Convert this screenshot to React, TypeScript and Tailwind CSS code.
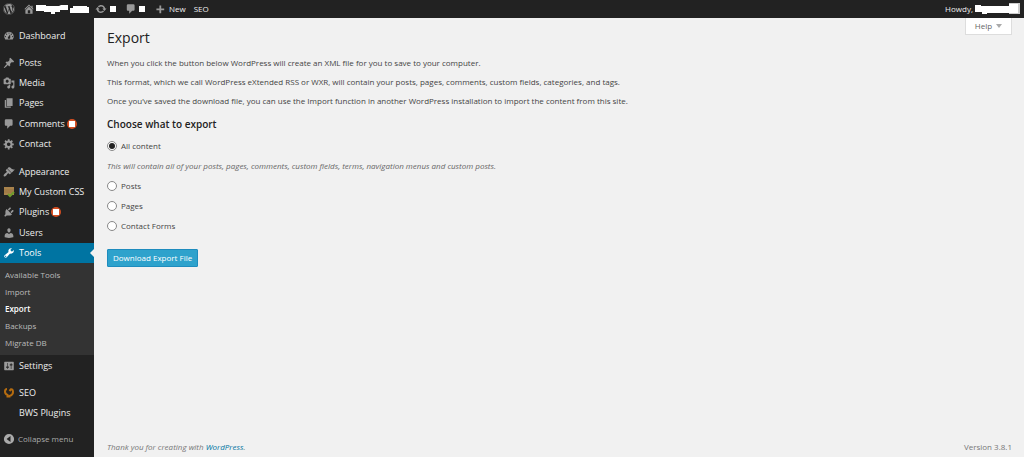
import { useState } from 'react';
import { FaWordpress } from 'react-icons/fa';

const icons = {
  dashboard:
    'M3.76 16h12.48A7.998 7.998 0 0 0 10 3a7.998 7.998 0 0 0-6.24 13zM10 4c.55 0 1 .45 1 1s-.45 1-1 1-1-.45-1-1 .45-1 1-1zM6 6c.55 0 1 .45 1 1s-.45 1-1 1-1-.45-1-1 .45-1 1-1zm8 0c.55 0 1 .45 1 1s-.45 1-1 1-1-.45-1-1 .45-1 1-1zm-5.37 5.55L12 7v6c0 1.1-.9 2-2 2s-2-.9-2-2c0-.57.24-1.08.63-1.45zM4 10c.55 0 1 .45 1 1s-.45 1-1 1-1-.45-1-1 .45-1 1-1zm12 0c.55 0 1 .45 1 1s-.45 1-1 1-1-.45-1-1 .45-1 1-1z',
  post: 'M10.44 3.02l1.82-1.82 6.36 6.35-1.83 1.82c-1.05-.68-2.48-.57-3.41.36l-.75.75c-.92.93-1.04 2.35-.35 3.41l-1.83 1.82-2.41-2.41-2.8 2.79c-.42.42-3.38 2.71-3.8 2.29s1.86-3.39 2.28-3.81l2.79-2.79L4.1 9.36l1.83-1.82c1.05.69 2.48.57 3.4-.36l.75-.75c.93-.92 1.05-2.35.36-3.41z',
  media:
    'M13 11V4c0-.55-.45-1-1-1h-1.67L9 1H5L3.67 3H2c-.55 0-1 .45-1 1v7c0 .55.45 1 1 1h10c.55 0 1-.45 1-1zM7 4.5c1.38 0 2.5 1.12 2.5 2.5S8.38 9.5 7 9.5 4.5 8.38 4.5 7 5.62 4.5 7 4.5zM14 6h5v10.5c0 1.38-1.12 2.5-2.5 2.5S14 17.88 14 16.5s1.12-2.5 2.5-2.5c.17 0 .34.02.5.05V9h-3V6zm-4 8.05V13h2v3.5c0 1.38-1.12 2.5-2.5 2.5S7 17.88 7 16.5 8.12 14 9.5 14c.17 0 .34.02.5.05z',
  page: 'M6 15V2h10v13H6zm-1 1h8v2H3V5h2v11z',
  comment:
    'M5 2h9q.82 0 1.41.59T16 4v7q0 .82-.59 1.41T14 13h-2l-5 5v-5H5q-.82 0-1.41-.59T3 11V4q0-.82.59-1.41T5 2z',
  gear: 'M18 12h-2.18c-.17.7-.44 1.35-.81 1.93l1.54 1.54-2.1 2.1-1.54-1.54c-.58.36-1.23.63-1.91.79V19H8v-2.18c-.68-.16-1.33-.43-1.91-.79l-1.54 1.54-2.12-2.12 1.54-1.54c-.36-.58-.63-1.23-.79-1.91H1V9.03h2.17c.16-.7.44-1.35.8-1.94L2.43 5.55l2.1-2.1 1.54 1.54c.58-.37 1.24-.64 1.93-.81V2h3v2.18c.68.16 1.33.43 1.91.79l1.54-1.54 2.12 2.12-1.54 1.54c.36.59.64 1.24.8 1.94H18V12zm-8.5 1.5c1.66 0 3-1.34 3-3s-1.34-3-3-3-3 1.34-3 3 1.34 3 3 3z',
  appearance:
    'M14.48 11.06L7.41 3.99l1.5-1.5c.5-.56 2.3-.47 3.51.32 1.21.8 1.43 1.28 2.91 2.1 1.18.64 2.45 1.26 4.45.85zm-.71.71L6.7 4.7 4.93 6.47c-.39.39-.39 1.02 0 1.41l1.06 1.06c.39.39.39 1.03 0 1.42-.6.6-1.43 1.11-2.21 1.69-.35.26-.7.53-1.01.84C1.43 14.23.4 16.08 1.4 17.07c.99 1 2.84-.03 4.18-1.36.31-.31.58-.66.85-1.02.57-.78 1.08-1.61 1.69-2.21.39-.39 1.02-.39 1.41 0l1.06 1.06c.39.39 1.02.39 1.41 0z',
  plugin:
    'M13.11 4.36L9.87 7.6 8 5.73l3.24-3.24c.35-.34 1.05-.2 1.56.32.52.51.66 1.21.31 1.55zm-8 1.77l.91-1.12 9.01 9.01-1.19.84c-.71.71-2.63 1.16-3.82 1.16H6.14L4.9 17.26c-.59.59-1.54.59-2.12 0-.59-.58-.59-1.53 0-2.12l1.24-1.24v-3.88c0-1.13.4-3.19 1.09-3.89zm7.26 3.97l3.24-3.24c.34-.35 1.04-.21 1.55.31.52.51.66 1.21.31 1.55l-3.24 3.25z',
  user: 'M10 9.25c-2.27 0-2.73-3.44-2.73-3.44C7 4.02 7.82 2 9.97 2c2.16 0 2.98 2.02 2.71 3.81 0 0-.41 3.44-2.68 3.44zm0 2.57L12.72 10c2.39 0 4.52 2.33 4.52 4.53v2.49s-3.65 1.13-7.24 1.13c-3.65 0-7.24-1.13-7.24-1.13v-2.49c0-2.25 1.94-4.48 4.47-4.48z',
  tools:
    'M16.68 9.77c-1.34 1.34-3.3 1.67-4.95.99l-5.41 6.52c-.99.99-2.59.99-3.58 0s-.99-2.59 0-3.57l6.52-5.42c-.68-1.65-.35-3.61.99-4.95 1.28-1.28 3.12-1.62 4.72-1.06l-2.89 2.89 2.82 2.82 2.86-2.87c.53 1.58.18 3.39-1.08 4.65zM3.81 16.21c.4.39 1.04.39 1.43 0 .4-.4.4-1.04 0-1.43-.39-.4-1.03-.4-1.43 0-.39.39-.39 1.03 0 1.43z',
  settings:
    'M18 16V4c0-.55-.45-1-1-1H3c-.55 0-1 .45-1 1v12c0 .55.45 1 1 1h14c.55 0 1-.45 1-1zM8 11h1c.55 0 1 .45 1 1s-.45 1-1 1H8v1.5c0 .28-.22.5-.5.5s-.5-.22-.5-.5V13H6c-.55 0-1-.45-1-1s.45-1 1-1h1V5.5c0-.28.22-.5.5-.5s.5.22.5.5V11zm5-2h-1c-.55 0-1-.45-1-1s.45-1 1-1h1V5.5c0-.28.22-.5.5-.5s.5.22.5.5V7h1c.55 0 1 .45 1 1s-.45 1-1 1h-1v5.5c0 .28-.22.5-.5.5s-.5-.22-.5-.5V9z',
  home: 'M16 8.5l1.53 1.53-1.06 1.06L10 4.6l-6.47 6.49-1.06-1.06L10 2.5l4 4v-2h2v4zm-6-2.46l6 5.99V18H4v-5.97zM12 17v-5H8v5h4z',
  update:
    'M10.2 3.28c3.53 0 6.43 2.61 6.92 6h2.08l-3.5 4-3.5-4h2.32c-.45-1.97-2.21-3.45-4.32-3.45-1.45 0-2.73.71-3.54 1.78L4.95 5.66C6.23 4.2 8.11 3.28 10.2 3.28zm-.4 13.44c-3.52 0-6.43-2.61-6.92-6H.8l3.5-4c1.17 1.33 2.33 2.67 3.5 4H5.48c.45 1.97 2.21 3.45 4.32 3.45 1.45 0 2.73-.71 3.54-1.78l1.71 1.95c-1.28 1.46-3.15 2.38-5.25 2.38z',
  plus: 'M17 9v3h-5v5H9v-5H4V9h5V4h3v5h5z',
  collapse:
    'M10 1.5a8.5 8.5 0 1 0 0 17 8.5 8.5 0 0 0 0-17zM12.5 5v10L6 10z',
};

type IconName = keyof typeof icons;

function Icon({ name }: { name: IconName }) {
  return (
    <svg viewBox="0 0 20 20" className="size-3 shrink-0" fill="currentColor" fillRule="evenodd" aria-hidden="true">
      <path d={icons[name]} />
    </svg>
  );
}

function CssIcon() {
  return (
    <svg viewBox="0 0 12 12" className="size-3 shrink-0" aria-hidden="true">
      <path d="M1 1h10v8H1z" fill="#a9834c" />
      <path d="M1 4h10M1 6h10" stroke="#8a683a" strokeWidth=".5" />
      <path d="M5 8l2 2 4-4" stroke="#6f9c2c" strokeWidth="2" fill="none" />
    </svg>
  );
}

function SeoIcon() {
  return (
    <svg viewBox="0 0 12 12" className="size-3 shrink-0" fill="none" stroke="#b56c10" strokeWidth="2" aria-hidden="true">
      <path d="M4 2Q2 2 2 4.500T4.500 8v2.500M6.500 4L8 2.200Q10 2 10 5T6.500 9v1.500" />
    </svg>
  );
}

interface MenuItem {
  label: string;
  icon?: IconName | 'css' | 'seo';
  badge?: boolean;
  current?: boolean;
}

const contentMenu: MenuItem[] = [
  { label: 'Posts', icon: 'post' },
  { label: 'Media', icon: 'media' },
  { label: 'Pages', icon: 'page' },
  { label: 'Comments', icon: 'comment', badge: true },
  { label: 'Contact', icon: 'gear' },
];

const siteMenu: MenuItem[] = [
  { label: 'Appearance', icon: 'appearance' },
  { label: 'My Custom CSS', icon: 'css' },
  { label: 'Plugins', icon: 'plugin', badge: true },
  { label: 'Users', icon: 'user' },
  { label: 'Tools', icon: 'tools', current: true },
];

const toolsMenu = ['Available Tools', 'Import', 'Export', 'Backups', 'Migrate DB'];

const exportTypes = ['Posts', 'Pages', 'Contact Forms'];

function MenuLink({ item }: { item: MenuItem }) {
  return (
    <a
      href="#"
      className={`relative flex min-h-5 items-center pt-px pl-[3px] text-[9px] ${item.current ? 'bg-[#0074a2] text-white' : 'text-[#eee]'}`}
    >
      <span className={`mr-1 flex w-3 ${item.current ? 'text-white' : 'text-[#999]'}`}>
        {item.icon === 'css' && <CssIcon />}
        {item.icon === 'seo' && <SeoIcon />}
        {item.icon && item.icon !== 'css' && item.icon !== 'seo' && <Icon name={item.icon} />}
      </span>
      {item.label}
      {item.badge && (
        <span className="ml-[2px] flex size-[10px] items-center justify-center rounded-full bg-[#d54e21]">
          <span className="size-[6px] bg-white" />
        </span>
      )}
      {item.current && (
        <span className="absolute right-0 border-y-4 border-r-4 border-y-transparent border-r-[#f1f1f1]" />
      )}
    </a>
  );
}

function AdminBar() {
  return (
    <header className="flex h-[18px] items-center bg-[#222] pr-1 pl-[3px] text-[8px] text-[#eee]">
      <a href="#" aria-label="About WordPress" className="mr-2 text-[#999]">
        <FaWordpress className="size-3" />
      </a>
      <a href="#" aria-label="Visit site" className="mr-[6px] flex items-center text-[#999]">
        <Icon name="home" />
        <svg viewBox="0 0 54 12" className="h-3 w-[54px]" fill="#fff" aria-hidden="true">
          <path d="M1 2h10v1h13l2-1h7v5h-8v2h-5v2h-4V9H9V8H1zM38 3h14v1h2v6H35V5h3z" />
        </svg>
      </a>
      <a href="#" aria-label="Updates" className="mr-[9px] flex items-center gap-[3px] text-[#999]">
        <Icon name="update" />
        <span className="size-[6px] bg-white" />
      </a>
      <a href="#" aria-label="Comments" className="mr-[9px] flex items-center gap-[2px] text-[#999]">
        <Icon name="comment" />
        <span className="size-[6px] bg-white" />
      </a>
      <a href="#" className="mr-2 flex items-center gap-[3px]">
        <span className="text-[#999]">
          <Icon name="plus" />
        </span>
        New
      </a>
      <a href="#">SEO</a>
      <a href="#" className="ml-auto flex items-center gap-[2px]">
        Howdy,
        <svg viewBox="0 0 45 12" className="h-3 w-[45px]" aria-hidden="true">
          <path d="M34 0h11v11H34z" fill="#ccc" />
          <path d="M0 2h6v1h28V1h9v9H12v1H7V9H0z" fill="#fff" />
        </svg>
      </a>
    </header>
  );
}

function Sidebar() {
  return (
    <nav className="flex w-[94px] shrink-0 flex-col bg-[#222] pt-[7px] text-[8px]">
      <MenuLink item={{ label: 'Dashboard', icon: 'dashboard' }} />
      <div className="mt-[7px] grid h-[102px] auto-rows-fr">
        {contentMenu.map((item) => (
          <MenuLink key={item.label} item={item} />
        ))}
      </div>
      <div className="mt-[7px] grid h-[102px] auto-rows-fr">
        {siteMenu.map((item) => (
          <MenuLink key={item.label} item={item} />
        ))}
      </div>
      <div className="grid h-[92px] auto-rows-fr bg-[#333] py-1 pl-[5px]">
        {toolsMenu.map((label) => (
          <a
            key={label}
            href="#"
            className={`flex items-center ${label === 'Export' ? 'font-semibold text-white' : 'text-[#bbb]'}`}
          >
            {label}
          </a>
        ))}
      </div>
      <MenuLink item={{ label: 'Settings', icon: 'settings' }} />
      <div className="mt-[7px]">
        <MenuLink item={{ label: 'SEO', icon: 'seo' }} />
        <MenuLink item={{ label: 'BWS Plugins' }} />
      </div>
      <button type="button" className="mt-[7px] flex h-5 items-center gap-[3px] pl-[3px] text-[#aaa]">
        <Icon name="collapse" />
        Collapse menu
      </button>
    </nav>
  );
}

interface RadioProps {
  label: string;
  value: string;
  onChange: (label: string) => void;
}

function ExportRadio({ label, value, onChange }: RadioProps) {
  return (
    <label className="flex h-5 items-center gap-1">
      <input
        type="radio"
        name="content"
        checked={value === label}
        onChange={() => onChange(label)}
        className="flex size-[10px] appearance-none items-center justify-center rounded-full border border-[#888] bg-white before:size-[6px] before:rounded-full checked:before:bg-[#222]"
      />
      {label}
    </label>
  );
}

export default function App() {
  const [content, setContent] = useState('All content');

  return (
    <div className="flex min-h-screen flex-col bg-[#f1f1f1] font-['Open_Sans',sans-serif] text-[8px] leading-3 text-[#444]">
      <AdminBar />
      <div className="flex flex-1">
        <Sidebar />
        <div className="relative flex flex-1 flex-col pr-3 pl-[13px]">
          <button
            type="button"
            className="absolute top-0 right-3 flex h-[17px] w-[47px] items-center justify-center gap-1 border border-t-0 border-[#ddd] bg-white text-[#666]"
          >
            Help
            <span className="border-x-[3px] border-t-4 border-x-transparent border-t-[#aaa]" />
          </button>

          <main>
            <h1 className="mt-[10px] text-[14px] leading-5 text-[#222]">Export</h1>
            <div className="mt-[9px] space-y-[7px]">
              <p>When you click the button below WordPress will create an XML file for you to save to your computer.</p>
              <p>
                This format, which we call WordPress eXtended RSS or WXR, will contain your posts, pages, comments,
                custom fields, categories, and tags.
              </p>
              <p>
                Once you&#8217;ve saved the download file, you can use the Import function in another WordPress
                installation to import the content from this site.
              </p>
            </div>
            <h2 className="mt-[9px] text-[10px] leading-4 font-semibold text-[#222]">Choose what to export</h2>
            <form className="mt-1" onSubmit={(e) => e.preventDefault()}>
              <ExportRadio label="All content" value={content} onChange={setContent} />
              <p className="mt-1 mb-1 text-[#666] italic">
                This will contain all of your posts, pages, comments, custom fields, terms, navigation menus and custom
                posts.
              </p>
              {exportTypes.map((type) => (
                <ExportRadio key={type} label={type} value={content} onChange={setContent} />
              ))}
              <button
                type="submit"
                className="mt-[13px] h-[18px] rounded-[1px] border border-[#1e8cbe] bg-[#2ea2cc] px-[5px] text-white"
              >
                Download Export File
              </button>
            </form>
          </main>

          <footer className="mt-auto flex justify-between pb-1 text-[#777]">
            <p className="italic">
              Thank you for creating with{' '}
              <a href="#" className="font-medium text-[#0074a2]">
                WordPress
              </a>
              .
            </p>
            <p>Version 3.8.1</p>
          </footer>
        </div>
      </div>
    </div>
  );
}
